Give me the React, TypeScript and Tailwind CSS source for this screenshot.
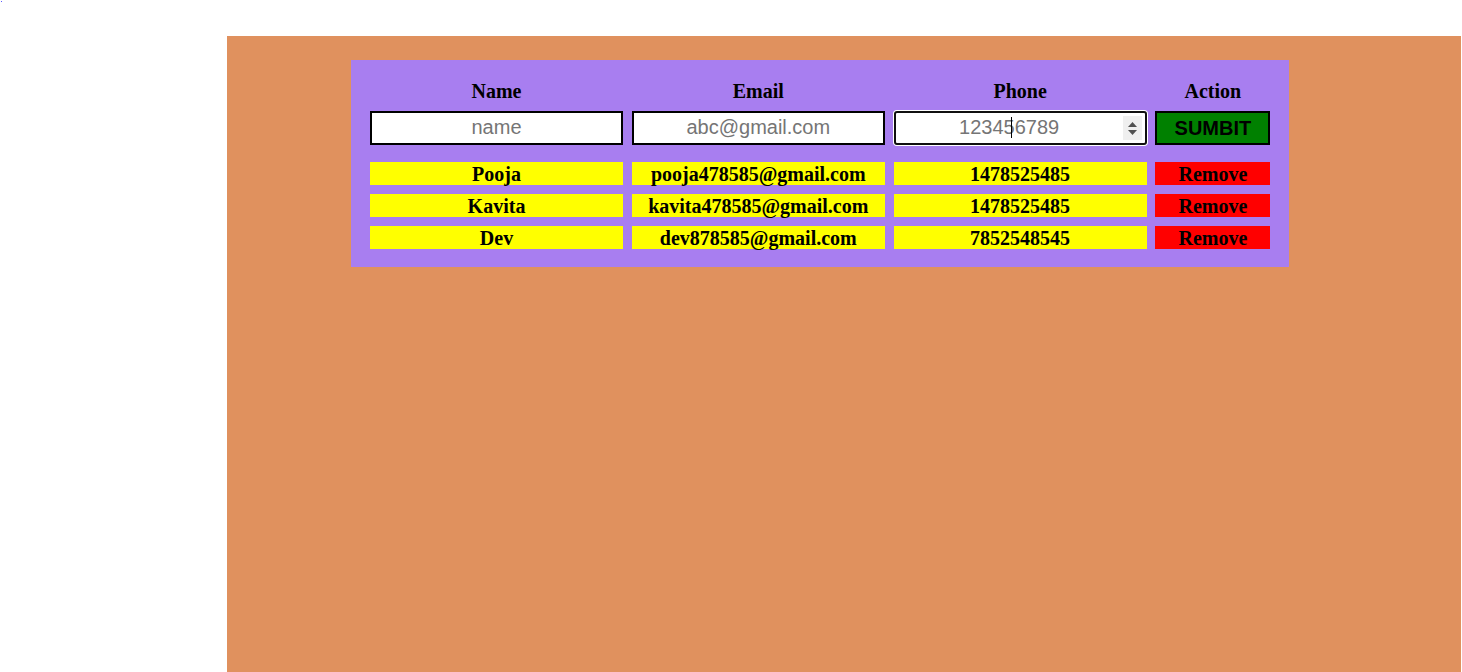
import React from 'react';

const rows = [
  { name: 'Pooja', email: 'pooja478585@gmail.com', phone: '1478525485' },
  { name: 'Kavita', email: 'kavita478585@gmail.com', phone: '1478525485' },
  { name: 'Dev', email: 'dev878585@gmail.com', phone: '7852548545' },
];

const serif = "font-['Liberation_Serif','Times_New_Roman',serif]";
const sans = "font-['Liberation_Sans',Arial,sans-serif]";

export default function App() {
  return (
    <div className="relative min-h-[672px] bg-white">
      {/* stray dot in the corner */}
      <div className="absolute left-[1px] top-[1px] h-px w-px bg-[#5a5aff]" />

      <div className="ml-[227px] mr-px pt-[36px]">
        <div className="h-[636px] bg-[#e0915e] pt-[24px] pl-[124px]">
          <div className="w-[938px] bg-[#a87ef0] px-[19px] pt-[19px] pb-[18px]">
            {/* head + form */}
            <div className="grid grid-cols-[253px_253px_253px_115px] gap-x-[8.8px] gap-y-[9px]">
              {['Name', 'Email', 'Phone', 'Action'].map((h) => (
                <div key={h} className={`${serif} h-[23px] pt-[2px] text-center text-[20px] font-bold leading-[21px] text-black`}>
                  {h}
                </div>
              ))}

              <input
                readOnly
                placeholder="name"
                className={`${sans} h-[34px] w-full border-2 border-black bg-white pb-px text-center text-[20px] outline-none placeholder:text-[#757575]`}
              />
              <input
                readOnly
                placeholder="abc@gmail.com"
                className={`${sans} h-[34px] w-full border-2 border-black bg-white pb-px text-center text-[20px] outline-none placeholder:text-[#757575]`}
              />
              <div className="relative h-[34px]">
                <input
                  readOnly
                  placeholder="123456789"
                  className={`${sans} h-[34px] w-full rounded-[3px] border-2 border-[#101010] bg-white pb-px pr-[22px] text-center text-[20px] outline-none ring-1 ring-white placeholder:text-[#757575]`}
                />
                {/* caret */}
                <div className="absolute left-[117px] top-[6px] h-[21px] w-px bg-black" />
                {/* number spinner */}
                <div className="absolute right-[5px] top-[5px] flex h-[24px] w-[19px] flex-col items-center justify-center gap-[3px] bg-[#efefef]">
                  <svg width="9" height="5" viewBox="0 0 9 5">
                    <path d="M4.5 0 L9 5 L0 5 Z" fill="#505050" />
                  </svg>
                  <svg width="9" height="5" viewBox="0 0 9 5">
                    <path d="M0 0 L9 0 L4.5 5 Z" fill="#505050" />
                  </svg>
                </div>
              </div>
              <button className={`${sans} h-[34px] w-full border-2 border-black bg-[#008000] pb-px text-[20px] font-bold text-black`}>
                SUMBIT
              </button>
            </div>

            {/* data rows */}
            <div className="mt-[17px] grid grid-cols-[253px_253px_253px_115px] gap-x-[8.8px] gap-y-[9px]">
              {rows.map((r) => (
                <React.Fragment key={r.email}>
                  <div className={`${serif} h-[23px] bg-[#ffff00] pt-[2px] text-center text-[20px] font-bold leading-[21px] text-black`}>
                    {r.name}
                  </div>
                  <div className={`${serif} h-[23px] bg-[#ffff00] pt-[2px] text-center text-[20px] font-bold leading-[21px] text-black`}>
                    {r.email}
                  </div>
                  <div className={`${serif} h-[23px] bg-[#ffff00] pt-[2px] text-center text-[20px] font-bold leading-[21px] text-black`}>
                    {r.phone}
                  </div>
                  <button className={`${serif} h-[23px] w-full bg-[#ff0000] pt-[2px] text-center text-[20px] font-bold leading-[21px] text-black`}>
                    Remove
                  </button>
                </React.Fragment>
              ))}
            </div>
          </div>
        </div>
      </div>
    </div>
  );
}
